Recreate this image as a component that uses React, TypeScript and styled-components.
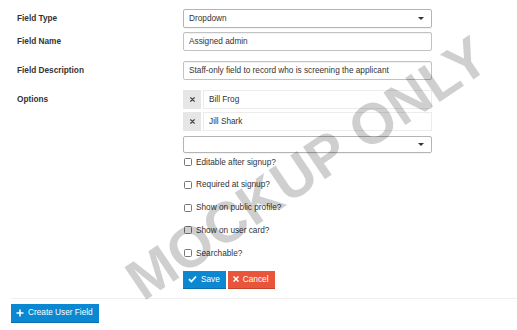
import { FC } from "react";
import styled, { createGlobalStyle } from "styled-components";

const GlobalStyle = createGlobalStyle`
  html, body {
    margin: 0;
    padding: 0;
    background: #fff;
  }
  body {
    font-family: "Liberation Sans", Arial, sans-serif;
    font-size: 8.25px;
    color: #333;
  }
`

const Page = styled.div`
  position: relative;
  width: 517px;
  height: 330px;
  overflow: hidden;
  padding: 9px 0 0 11px;
  box-sizing: border-box;
`

const FormRow = styled.div<{ $gap?: number }>`
  display: grid;
  grid-template-columns: 172px 249px;
  margin-bottom: ${(p) => p.$gap ?? 0}px;
`

const Label = styled.label`
  padding-left: 6px;
  font-weight: bold;
  line-height: 19px;
  height: 19px;
`

const Control = styled.div`
  display: flex;
  flex-direction: column;
`

const TextBox = styled.div`
  height: 19px;
  box-sizing: border-box;
  border: 1px solid #c2c2c2;
  border-radius: 2px;
  box-shadow: inset 0 1px 1px rgba(0, 0, 0, 0.06);
  padding: 0 5px;
  line-height: 17px;
  white-space: nowrap;
  overflow: hidden;
`

const SelectBox = styled.div<{ $height?: number }>`
  height: ${(p) => p.$height ?? 19}px;
  box-sizing: border-box;
  border: 1px solid #b4b4b4;
  border-radius: 2px;
  box-shadow: 0 1px 1px rgba(0, 0, 0, 0.05);
  padding: 0 5px;
  display: flex;
  align-items: center;
  justify-content: space-between;
`

const Caret = styled.span`
  width: 0;
  height: 0;
  border-left: 3px solid transparent;
  border-right: 3px solid transparent;
  border-top: 3px solid #333;
  margin-right: 2px;
`

const OptionList = styled.div`
  display: flex;
  flex-direction: column;
  gap: 3px;
  margin-bottom: 5px;
`

const OptionRow = styled.div`
  display: flex;
  gap: 2px;
  height: 19px;
`

const RemoveButton = styled.button`
  width: 18px;
  height: 19px;
  border: none;
  padding: 0;
  background: #e6e6e6;
  display: flex;
  align-items: center;
  justify-content: center;
  color: #444;
`

const OptionInput = styled.div`
  flex: 1;
  box-sizing: border-box;
  border: 1px solid #ececec;
  padding: 0 5px;
  line-height: 17px;
`

const CheckList = styled.div`
  display: flex;
  flex-direction: column;
  gap: 4.8px;
  margin-bottom: 8.8px;
`

const CheckRow = styled.label`
  height: 18px;
  display: flex;
  align-items: center;
  gap: 4px;
  padding-left: 1px;
`

const CheckBox = styled.span`
  width: 8px;
  height: 8px;
  box-sizing: border-box;
  border: 1px solid #767676;
  border-radius: 1.5px;
  background: #fff;
`

const ButtonBar = styled.div`
  display: flex;
  gap: 2px;
`

const Button = styled.button<{ $color: string; $dark: string }>`
  height: 18px;
  box-sizing: border-box;
  border: none;
  border-bottom: 1px solid ${(p) => p.$dark};
  background: ${(p) => p.$color};
  color: #fff;
  font-family: inherit;
  font-size: 8.25px;
  padding: 0 6px 0 5px;
  display: flex;
  align-items: center;
  gap: 4px;
  cursor: pointer;
`

const Divider = styled.div`
  height: 1px;
  background: #eeeeee;
  margin: 9px 0 5px;
`

const CreateButton = styled(Button)`
  height: 19px;
  padding: 0 6px 0 5px;
`

const Watermark = styled.div`
  position: absolute;
  left: 307px;
  top: 168px;
  transform: translate(-50%, -50%) rotate(-34deg);
  font-family: "Liberation Sans", Arial, sans-serif;
  font-weight: bold;
  font-size: 57px;
  white-space: nowrap;
  color: rgba(0, 0, 0, 0.19);
  pointer-events: none;
  line-height: 1;
`

const CheckIcon = () => (
  <svg width="9" height="8" viewBox="0 0 9 8">
    <polyline points="1,4.2 3.4,6.5 8,1.5" fill="none" stroke="#fff" strokeWidth="1.8" />
  </svg>
)

const CrossIcon: FC<{ color: string; size?: number }> = ({ color, size = 6 }) => (
  <svg width={size} height={size} viewBox="0 0 6 6">
    <path d="M1 1 L5 5 M5 1 L1 5" stroke={color} strokeWidth="1.5" strokeLinecap="square" />
  </svg>
)

const PlusIcon = () => (
  <svg width="8" height="8" viewBox="0 0 8 8">
    <path d="M4 0.5 V7.5 M0.5 4 H7.5" stroke="#fff" strokeWidth="1.5" />
  </svg>
)

const checks = [
  "Editable after signup?",
  "Required at signup?",
  "Show on public profile?",
  "Show on user card?",
  "Searchable?",
]

const App: FC = () => (
  <>
    <GlobalStyle />
    <Page>
      <FormRow $gap={4}>
        <Label>Field Type</Label>
        <SelectBox>
          <span>Dropdown</span>
          <Caret />
        </SelectBox>
      </FormRow>
      <FormRow $gap={10}>
        <Label>Field Name</Label>
        <TextBox>Assigned admin</TextBox>
      </FormRow>
      <FormRow $gap={10}>
        <Label>Field Description</Label>
        <TextBox>Staff-only field to record who is screening the applicant</TextBox>
      </FormRow>
      <FormRow>
        <Label>Options</Label>
        <Control>
          <OptionList>
            {["Bill Frog", "Jill Shark"].map((o) => (
              <OptionRow key={o}>
                <RemoveButton>
                  <CrossIcon color="#444" size={5} />
                </RemoveButton>
                <OptionInput>{o}</OptionInput>
              </OptionRow>
            ))}
          </OptionList>
          <SelectBox $height={17}>
            <span />
            <Caret />
          </SelectBox>
          <CheckList>
            {checks.map((c) => (
              <CheckRow key={c}>
                <CheckBox />
                {c}
              </CheckRow>
            ))}
          </CheckList>
          <ButtonBar>
            <Button $color="#0b88d1" $dark="#0a6fae">
              <CheckIcon />
              Save
            </Button>
            <Button $color="#e9553a" $dark="#c8432b">
              <CrossIcon color="#fff" />
              Cancel
            </Button>
          </ButtonBar>
        </Control>
      </FormRow>
      <Divider />
      <CreateButton $color="#0b88d1" $dark="#0a6fae">
        <PlusIcon />
        Create User Field
      </CreateButton>
      <Watermark>MOCKUP ONLY</Watermark>
    </Page>
  </>
)

export default App
